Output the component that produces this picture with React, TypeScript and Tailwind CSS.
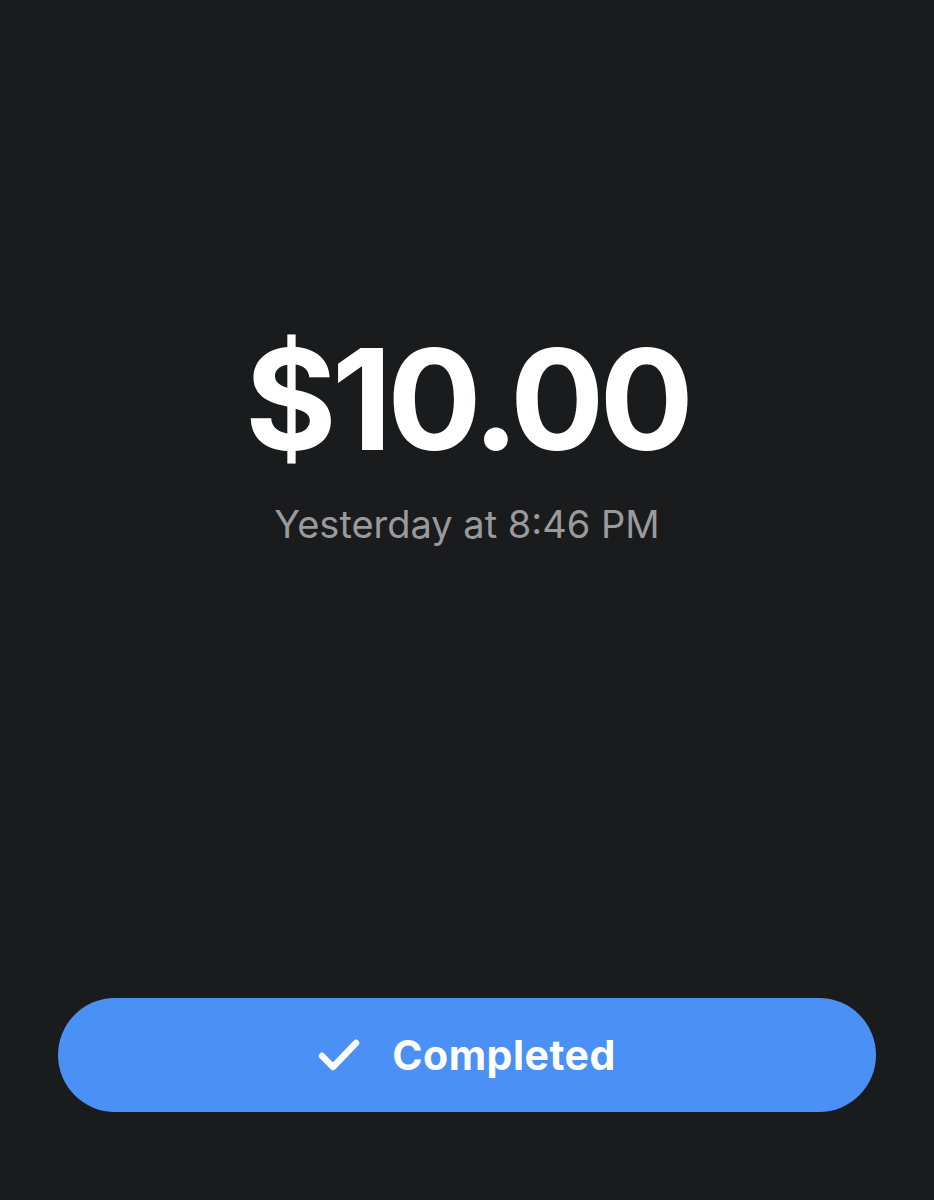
import React from 'react';

const CheckIcon = () => (
  <svg width="42" height="34" viewBox="0 0 42 34" fill="none" aria-hidden="true">
    <path d="M4 18 L15 29 L38 5" stroke="white" strokeWidth="6.5" strokeLinecap="round" strokeLinejoin="round" />
  </svg>
);

export default function App() {
  return (
    <div
      className="w-[934px] h-[1200px] bg-[#1a1b1d] flex flex-col items-center"
      style={{ fontFamily: 'Inter, "Noto Sans", sans-serif' }}
    >
      {/* Amount */}
      <div className="mt-[329px] text-white font-bold text-[140px] leading-none tracking-[-5px]">
        $10.00
      </div>
      <div className="mt-[36px] text-[#9a9a9c] text-[38px] leading-none">
        Yesterday at 8:46 PM
      </div>

      <div className="flex-1" />

      {/* Status */}
      <div className="w-full px-[58px] mb-[88px]">
        <div className="h-[114px] rounded-full bg-[#4b91f5] flex items-center justify-center gap-[32px]">
          <CheckIcon />
          <span className="text-white font-bold text-[41px] leading-none tracking-[0.5px]">Completed</span>
        </div>
      </div>
    </div>
  );
}
